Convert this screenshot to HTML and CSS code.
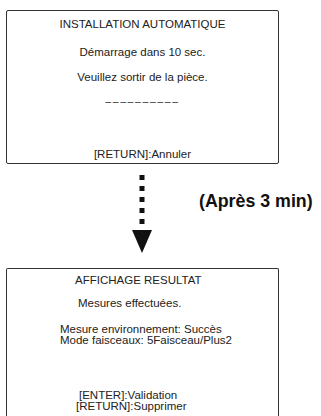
FILE: index.html
```html
<!DOCTYPE html>
<html lang="fr">
<head>
<meta charset="utf-8">
<link rel="stylesheet" href="styles.css">
</head>
<body>
<div class="page">
  <div class="screen screen-one">
    <p class="line title">INSTALLATION AUTOMATIQUE</p>
    <p class="line l2">Démarrage dans 10 sec.</p>
    <p class="line l3">Veuillez sortir de la pièce.</p>
    <p class="line dashes">‒‒‒‒‒‒‒‒‒‒</p>
    <p class="line foot">[RETURN]:Annuler</p>
  </div>
  <div class="transition">
    <svg class="arrow" width="22" height="84" viewBox="0 0 22 84">
      <rect x="8.5" y="0" width="5" height="5" fill="#111"/>
      <rect x="8.5" y="11" width="5" height="5" fill="#111"/>
      <rect x="8.5" y="22" width="5" height="5" fill="#111"/>
      <rect x="8.5" y="33" width="5" height="5" fill="#111"/>
      <rect x="8.5" y="44" width="5" height="5" fill="#111"/>
      <polygon points="1,55 21,55 11,78" fill="#111"/>
    </svg>
    <span class="after">(Après 3 min)</span>
  </div>
  <div class="screen screen-two">
    <p class="line r-title">AFFICHAGE RESULTAT</p>
    <p class="line r-done">Mesures effectuées.</p>
    <p class="line r-info">Mesure environnement: Succès<br>Mode faisceaux: 5Faisceau/Plus2</p>
    <p class="line r-keys"><span class="k1">[ENTER]:Validation</span><br><span class="k2">[RETURN]:Supprimer</span></p>
  </div>
</div>
</body>
</html>
```
FILE: styles.css
```css
html, body {
  margin: 0;
  padding: 0;
  background: #fff;
}
body {
  font-family: "Liberation Sans", Arial, sans-serif;
  color: #222;
  width: 321px;
  height: 416px;
  overflow: hidden;
}
.page {
  padding: 10px 0 0 6px;
}
.screen {
  width: 273px;
  box-sizing: border-box;
  border: 1.5px solid #333;
  border-radius: 2px;
  font-size: 11.5px;
  line-height: 12px;
}
.screen-one {
  height: 154px;
  text-align: center;
  display: flex;
  flex-direction: column;
}
.line {
  margin: 0;
}
.title { margin-top: 7px; }
.l2 { margin-top: 16px; }
.l3 { margin-top: 13px; }
.dashes {
  margin-top: 12px;
  letter-spacing: 1.6px;
  color: #333;
  font-size: 10.5px;
}
.foot { margin-top: auto; margin-bottom: 3px; }

.transition {
  height: 104px;
  position: relative;
}
.arrow {
  position: absolute;
  left: 125px;
  top: 11px;
}
.after {
  position: absolute;
  left: 193px;
  top: 27px;
  font-weight: bold;
  font-size: 17.8px;
  color: #111;
}
.screen-two {
  height: 160px;
  border-bottom: none;
  border-radius: 2px 2px 0 0;
}
.r-title { margin-top: 5px; padding-left: 68px; }
.r-done { margin-top: 11px; padding-left: 71px; }
.r-info { margin-top: 15px; padding-left: 53px; line-height: 11px; }
.r-keys { margin-top: 44px; line-height: 10.5px; }
.k1 { padding-left: 72px; }
.k2 { padding-left: 69px; }
```
